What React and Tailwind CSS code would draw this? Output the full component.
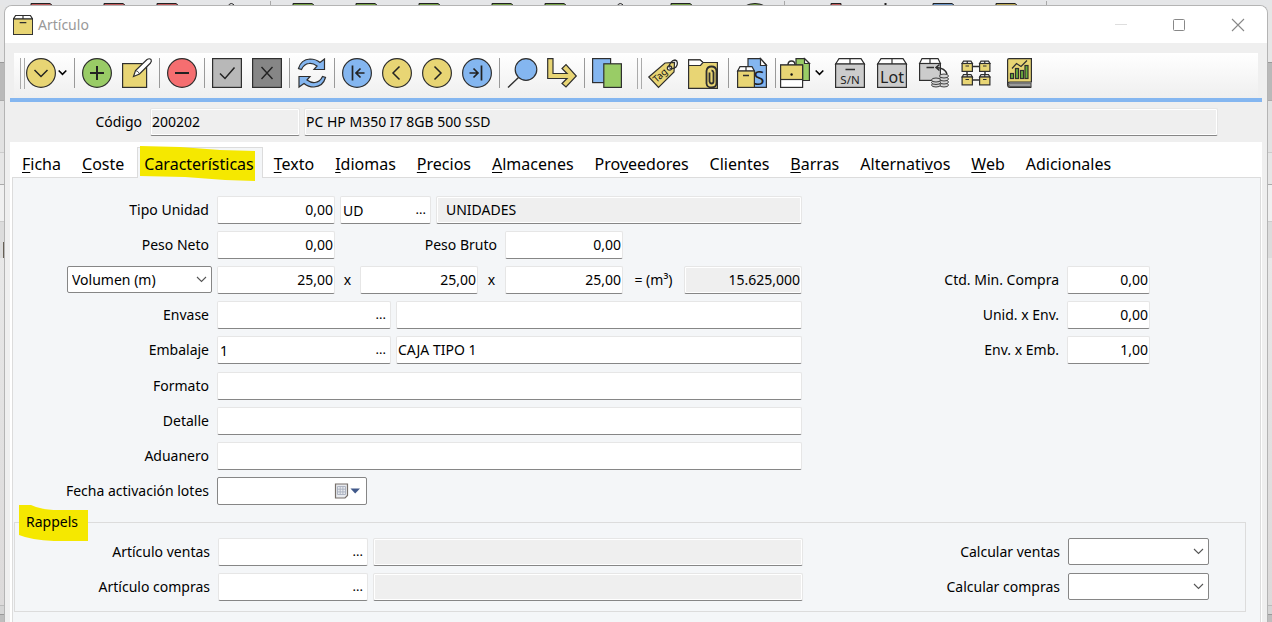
import React from "react";

const INK = "#2f2f2f";
const YELLOW = "#e8d574";
const BLUE = "#84b6f0";
const GREEN = "#99cc66";
const GREY = "#cccccc";

function Icon({ children }) {
  return (
    <svg className="block size-[30px] overflow-visible" viewBox="0 0 30 30" fill="none" stroke={INK} strokeWidth="1.2" aria-hidden="true">
      {children}
    </svg>
  );
}

function Disc({ fill, d, width = 1.5 }) {
  return (
    <Icon>
      <circle cx="15" cy="15" r="14.4" fill={fill} />
      <path d={d} strokeWidth={width} stroke="#222" />
    </Icon>
  );
}

function Carton({ x = 0, y = 0, w = 30, h = 30, lid = 6, fill = YELLOW, inset = 4 }) {
  return (
    <g>
      <path d={`M${x + 0.6} ${y + lid}L${x + inset} ${y + 0.6}H${x + w - inset}L${x + w - 0.6} ${y + lid}Z`} fill="#fff" />
      <rect x={x + 0.6} y={y + lid} width={w - 1.2} height={h - lid - 0.6} fill={fill} />
      <path d={`M${x + w / 2} ${y + 0.6}V${y + lid}`} />
    </g>
  );
}

const icons = {
  menu: <Disc fill={YELLOW} d="M8.5 12L15 18.5L21.500 12" />,
  add: <Disc fill={GREEN} d="M15 8V22M8 15H22" width={2} />,
  remove: <Disc fill="#f56e70" d="M8 15H22" width={1.8} />,
  first: <Disc fill={BLUE} d="M10.500 7.500V22.500M22.500 15H14M18.500 10.500L14 15L18.500 19.500" width={1.7} />,
  prev: <Disc fill={YELLOW} d="M17.500 8.500L11 15L17.500 21.500" />,
  next: <Disc fill={YELLOW} d="M12.500 8.500L19 15L12.500 21.500" />,
  last: <Disc fill={BLUE} d="M19.500 7.500V22.500M7.500 15H16M11.500 10.500L16 15L11.500 19.500" width={1.7} />,
  edit: (
    <Icon>
      <rect x="0.6" y="5.600" width="24" height="23.800" fill={YELLOW} />
      <path d="M11.500 18.500L13.500 12.500L25 1.500Q27.500 0 29 1.500Q30 3 28.500 5L17.500 16Z" fill="#fff" />
      <path d="M13.500 12.500Q16.500 13 17.500 16" strokeWidth="0.8" />
    </Icon>
  ),
  check: (
    <Icon>
      <rect x="0.6" y="0.6" width="28.800" height="28.800" fill="#b8b8b8" />
      <path d="M8 15.500L13 20.500L22.500 9.500" stroke="#222" strokeWidth="1.500" />
    </Icon>
  ),
  cancel: (
    <Icon>
      <rect x="0.6" y="0.6" width="28.800" height="28.800" fill="#868686" />
      <path d="M9.500 9L20.500 21M20.500 9L9.500 21" stroke="#222" strokeWidth="1.400" />
    </Icon>
  ),
  refresh: (
    <Icon>
      <path d="M1.500 10.500Q4 1.500 13 1Q19 1 23 4.500L27.500 1V11.500H17L20 8Q16 5 12 5.500Q7 6 4.500 11.500Z" fill={BLUE} />
      <path d="M28.500 19.500Q26 28.500 17 29Q11 29 7 25.500L2 29V18.500H13L10 22Q14 25 18 24.500Q23 24 25.500 18.500Z" fill={BLUE} />
    </Icon>
  ),
  search: (
    <Icon>
      <circle cx="19" cy="11.500" r="10.800" fill={BLUE} />
      <path d="M11.500 19.500L1 29.500" strokeWidth="1.400" />
    </Icon>
  ),
  goto: (
    <Icon>
      <path d="M0.700 0.700H6V15.500H20L15 10.500L19 6.500L29.300 18L19 29L15 25.500L20 20.500H0.700Z" fill={YELLOW} />
    </Icon>
  ),
  copy: (
    <Icon>
      <rect x="0.6" y="0.6" width="18" height="24" fill={BLUE} />
      <rect x="11.800" y="5.800" width="17.600" height="23.600" fill={GREEN} />
    </Icon>
  ),
  tag: (
    <Icon>
      <path d="M0.800 18L17 4L26.500 3.500L26 13L10.500 28.500Z" fill={YELLOW} />
      <circle cx="21.500" cy="9" r="2.200" fill="#fff" />
      <path d="M21 8.500C21 5 24 1 27 1C30 1.500 30 5.500 28 8C26.500 9.500 24 10 21.500 9" strokeWidth="1.300" />
      <text x="8.500" y="24" transform="rotate(-42 8.500 24)" fontSize="9.500" fontFamily="Noto Sans, sans-serif" fill="#111" stroke="none">Tag</text>
    </Icon>
  ),
  folder: (
    <Icon>
      <path d="M0.600 29.400V0.800H12L15 3.500H29.400V29.400Z" fill={YELLOW} />
      <path d="M0.600 5.500V0.800H12L15 3.500L12.500 6.500H0.600Z" fill="#fff" />
      <path d="M18.500 12V24.500Q19 28.500 23.500 28.500Q28.500 28.500 28.500 24V12Q28 7.500 23.500 7.500Q19 7.500 18.500 12M21.500 13.500V22.500Q22 24.500 23.500 24.500Q25.500 24.500 25.500 22.500V13.500Q25 11.500 23.500 11.500" strokeWidth="1.800" />
    </Icon>
  ),
  boxDoc: (
    <Icon>
      <path d="M11 0.600H23.500L29.400 7V29.400H11Z" fill={BLUE} />
      <path d="M23.500 0.600V7.500H29.400Z" fill="#fff" />
      <Carton x={0} y={8} w={18} h={22} lid={5} inset={3} />
      <path d="M6 17.500H12" strokeWidth="1.600" />
      <text x="16.500" y="27" fontSize="20" fontFamily="Noto Sans, sans-serif" fill="#222" stroke="none">S</text>
    </Icon>
  ),
  caseDoc: (
    <Icon>
      <path d="M16 0.600H24.500L29.400 5.500V22.500H16Z" fill={GREEN} />
      <path d="M24.500 0.600V5.500H29.400Z" fill="#fff" />
      <path d="M8 7Q8 3 11.500 3Q15 3 15 7" strokeWidth="1.500" />
      <rect x="0.6" y="7" width="22" height="22.400" fill="#fff" />
      <rect x="0.6" y="7" width="22" height="14.500" fill={YELLOW} />
      <circle cx="11.600" cy="16.500" r="1.200" fill="#111" stroke="none" />
    </Icon>
  ),
  serial: (
    <Icon>
      <Carton fill={GREY} />
      <path d="M10.500 11.500H20" strokeWidth="1.700" />
      <text x="15" y="25.500" textAnchor="middle" fontSize="11.500" fontFamily="Noto Sans, sans-serif" fill="#222" stroke="none">S/N</text>
    </Icon>
  ),
  lot: (
    <Icon>
      <Carton fill={GREY} />
      <text x="15" y="25" textAnchor="middle" fontSize="16" fontFamily="Noto Sans, sans-serif" fill="#222" stroke="none">Lot</text>
    </Icon>
  ),
  coins: (
    <Icon>
      <Carton w={22} h={23} lid={5.500} fill={GREY} inset={3} />
      <path d="M7.500 9.500H15" strokeWidth="1.600" />
      <path d="M28 16Q26 10 17.500 9.500M20.500 6.500L17 9.500L20.500 12.500" strokeWidth="1.500" />
      <g fill="#d4d4d4" strokeWidth="0.9">
        <ellipse cx="25" cy="27" rx="4.500" ry="2" />
        <ellipse cx="25" cy="24" rx="4.500" ry="2" />
        <ellipse cx="25" cy="21" rx="4.500" ry="2" />
        <ellipse cx="25" cy="18" rx="4.500" ry="2" />
        <ellipse cx="17" cy="27" rx="4.500" ry="2" />
        <ellipse cx="17" cy="24.500" rx="4.500" ry="2" />
        <ellipse cx="17" cy="22" rx="4.500" ry="2" />
      </g>
    </Icon>
  ),
  nodes: (
    <Icon>
      <path d="M11 8.500H19M11 22H19M6 14V17M24 14V17" strokeWidth="1.500" />
      {[[0.5, 2.5], [18, 2.5], [0.5, 16], [18, 16]].map(([x, y]) => (
        <g key={`${x}-${y}`}>
          <Carton x={x} y={y} w={11.500} h={11.500} lid={3} inset={2} />
          <path d={`M${x + 4} ${y + 5.500}H${x + 7.500}`} />
        </g>
      ))}
    </Icon>
  ),
  report: (
    <Icon>
      <path d="M4.600 26V2Q4.600 0.600 6 0.600H28.400V24H7Q4.600 24 4.600 26.500Q4.600 29.400 7 29.400H28.400" fill={YELLOW} />
      <path d="M6 25H28V28.500H7Q4.500 27 6 25Z" fill="#9a9a9a" stroke="#555" />
      <g fill="#6cae3c">
        <rect x="7.500" y="15.500" width="3" height="5" />
        <rect x="12.500" y="10.500" width="3" height="10" />
        <rect x="17.500" y="12.500" width="3" height="8" />
        <rect x="22" y="7.500" width="3" height="13" />
      </g>
      <path d="M9 10.500L13.500 5.500L18 8.500L24 2.500" />
    </Icon>
  ),
};

function Tool({ name, label }) {
  return (
    <button type="button" aria-label={label} className="shrink-0">
      {icons[name]}
    </button>
  );
}

function More({ label }) {
  return (
    <button type="button" aria-label={label} className="shrink-0">
      <svg className="block h-[30px] w-[9px]" viewBox="0 0 9 30" fill="none" stroke="#000" strokeWidth="1.600" aria-hidden="true">
        <path d="M0.700 12.500L4.500 16.300L8.300 12.500" />
      </svg>
    </button>
  );
}

const Sep = () => <span className="mx-[7px] h-[30px] w-px shrink-0 bg-[#999]" />;
const Grip = () => <span className="h-[31px] w-[5px] shrink-0 border-x border-[#aaa]" />;
const Group = ({ children }) => <div className="flex shrink-0 gap-2.5">{children}</div>;

const edge = "rounded-[2px] border border-[#e6e6e6] border-b-[#868686]";
const plain = `${edge} h-7 bg-white px-px pb-0.5 outline-none`;
const locked = `${edge} h-7 bg-[#efefef] px-px pb-0.5 outline-none shadow-[inset_0_0_0_1px_#fff]`;

function Label({ htmlFor, children, className = "w-[195px]" }) {
  return (
    <label htmlFor={htmlFor} className={`${className} shrink-0 pb-0.5 text-right whitespace-nowrap`}>
      {children}
    </label>
  );
}

function Num({ id, value, label, className = "w-[118px]" }) {
  return <input id={id} aria-label={label} defaultValue={value} className={`${plain} ${className} shrink-0 text-right`} />;
}

function Lookup({ id, label, value = "", className }) {
  return (
    <div className={`${edge} ${className} flex h-7 shrink-0 bg-white`}>
      <input id={id} aria-label={label} defaultValue={value} className="min-w-0 flex-1 px-[2px] outline-none" />
      <button type="button" aria-label="Buscar" className="px-1 text-[13px]">...</button>
    </div>
  );
}

function Combo({ id, label, options, className }) {
  return (
    <div className={`${className} relative shrink-0 pb-px`}>
      <select id={id} aria-label={label} className="block h-[27px] w-full appearance-none rounded-[2px] border border-[#868686] bg-white px-1 outline-none">
        {options.map((o) => (
          <option key={o}>{o}</option>
        ))}
      </select>
      <svg className="pointer-events-none absolute top-[10px] right-[5px] h-[7px] w-[11px]" viewBox="0 0 11 7" fill="none" stroke="#555" strokeWidth="1.100" aria-hidden="true">
        <path d="M1 1L5.500 5.500L10 1" />
      </svg>
    </div>
  );
}

const Row = ({ children }) => <div className="flex h-7 items-center">{children}</div>;

const tabs = [
  ["", "F", "icha"],
  ["", "C", "oste"],
  ["Características", "", ""],
  ["", "T", "exto"],
  ["", "I", "diomas"],
  ["", "P", "recios"],
  ["", "A", "lmacenes"],
  ["Pro", "v", "eedores"],
  ["Clientes", "", ""],
  ["", "B", "arras"],
  ["Alternati", "v", "os"],
  ["", "W", "eb"],
  ["Adicionales", "", ""],
];

function Tab({ parts }) {
  const [before, key, after] = parts;
  const active = before === "Características";
  const text = (
    <span className="relative">
      {before}
      {key && <span className="underline decoration-1 underline-offset-2 [text-decoration-skip-ink:none]">{key}</span>}
      {after}
    </span>
  );
  if (active) {
    return (
      <button type="button" role="tab" aria-selected="true" className="relative -mb-px ml-0.5 h-[31px] border border-b-0 border-[#dcdcdc] bg-[#f4f6f8] pt-0.5 pr-2 pl-1.5 leading-5 whitespace-nowrap">
        <svg className="absolute top-[-2px] left-[2px] h-[35px] w-[115px]" viewBox="0 0 115 35" preserveAspectRatio="none" aria-hidden="true">
          <path d="M0 0L40 1L80 4L115 5V35L85 34L45 31L0 30Z" fill="#f5e800" />
        </svg>
        {text}
      </button>
    );
  }
  return (
    <button type="button" role="tab" aria-selected="false" className="h-[30px] px-2.5 pt-[3px] leading-5 whitespace-nowrap">
      {text}
    </button>
  );
}

function BehindTop() {
  const docs = [
    [31, "#c05a5c"], [104, "#c05a5c"], [157, "#c05a5c"], [293, "#74a045"], [356, "#74a045"], [419, "#74a045"],
    [492, "#74a045"], [545, "#74a045"], [671, "#74a045"], [933, "#6a94c6"], [996, "#b9a552"],
  ];
  return (
    <svg className="block h-[5px] w-[1272px] max-w-none" viewBox="0 0 1272 5" fill="none" stroke="#222" aria-hidden="true">
      {docs.map(([x, c]) => (
        <path key={x} d={`M${x} 6V3.500H${x + 19}L${x + 22} 6`} fill={c} />
      ))}
      <path d="M228 6Q231 1 235 6M617 6Q620 1 624 6" />
      <path d="M745 6Q755 1 765 6" fill="#74a045" />
      <path d="M831 6V3.500H841V6" fill="#c05a5c" />
      <path d="M885.500 3V5" strokeWidth="2" />
      <path d="M270.500 1V5M784.500 1V5M1046.500 1V5" stroke="#a8a8a8" />
    </svg>
  );
}

function BehindSide({ children }) {
  return (
    <div className="flex w-1 shrink-0 flex-col bg-[#e6e6e6]">
      <div className="h-[57px]" />
      <div className="h-[38px] border-t border-[#999] bg-[#b9b9b9]" />
      <div className="h-[52px] border-t border-[#aaa] bg-[#e2e2e2]" />
      <div className="h-[32px] border-t border-[#ccc] bg-[#e6e6e6]" />
      <div className="h-[37px] border-t border-[#aaa] bg-[#f0f0f0]" />
      <div className="h-[37px] border-t border-[#ccc] bg-[#dcdcdc]">{children}</div>
      <div className="flex-1 bg-linear-to-b from-[#e8e8e8] to-[#dcdada]" />
      <div className="h-[9px] border-t border-[#bbb] bg-[#d5d5d5]" />
      <div className="h-2 border-t border-[#999] bg-[#bebebe]" />
    </div>
  );
}

export default function App() {
  return (
    <div className="flex min-h-screen flex-col overflow-hidden bg-[#e5e6e8] font-['Noto_Sans',sans-serif] text-[14px] text-black">
      <div className="h-[5px] overflow-hidden">
        <BehindTop />
      </div>
      <div className="flex flex-1">
        <BehindSide>
          <div className="mt-5 ml-[3px] h-4 bg-[#665f55]" />
        </BehindSide>

        <main className="flex min-w-0 flex-1 flex-col overflow-hidden rounded-t-lg border border-b-0 border-[#b4b4b4] bg-[#efefef]">
          <header className="flex h-[37px] shrink-0 items-center bg-white pr-[22px] pl-2">
            <svg className="size-5" viewBox="0 0 30 30" fill="none" stroke={INK} strokeWidth="1.700" aria-hidden="true">
              <Carton />
              <path d="M10 11.500H20" strokeWidth="2" />
            </svg>
            <h1 className="ml-[5px] flex-1 text-[14px] text-[#999]">Artículo</h1>
            <div className="flex items-center gap-[46px]">
              <button type="button" aria-label="Minimizar">
                <svg className="block size-3" viewBox="0 0 12 12" aria-hidden="true"><path d="M0 5.500H12" stroke="#dedede" /></svg>
              </button>
              <button type="button" aria-label="Maximizar">
                <svg className="block size-3" viewBox="0 0 12 12" aria-hidden="true"><rect x="0.5" y="0.5" width="11" height="11" rx="1" fill="none" stroke="#888" /></svg>
              </button>
              <button type="button" aria-label="Cerrar">
                <svg className="block size-3.5" viewBox="0 0 14 14" aria-hidden="true"><path d="M1 1L13 13M13 1L1 13" stroke="#888" strokeWidth="1.100" /></svg>
              </button>
            </div>
          </header>

          <div className="mt-2.5 px-[5px]">
            <div className="border-b-4 border-[#84b6f0] px-1">
              <div role="toolbar" aria-label="Acciones" className="flex h-[45px] items-start bg-linear-to-b from-white to-[#efefef] pt-[5px] pl-1.5">
                <Grip />
                <div className="ml-px flex shrink-0 gap-0.5">
                  <Tool name="menu" label="Menú" />
                  <More label="Más opciones" />
                </div>
                <Sep />
                <Group><Tool name="add" label="Nuevo" /><Tool name="edit" label="Editar" /></Group>
                <Sep />
                <Tool name="remove" label="Eliminar" />
                <Sep />
                <Group><Tool name="check" label="Aceptar" /><Tool name="cancel" label="Cancelar" /></Group>
                <Sep />
                <Tool name="refresh" label="Actualizar" />
                <Sep />
                <Group>
                  <Tool name="first" label="Primero" />
                  <Tool name="prev" label="Anterior" />
                  <Tool name="next" label="Siguiente" />
                  <Tool name="last" label="Último" />
                </Group>
                <Sep />
                <Group><Tool name="search" label="Buscar" /><Tool name="goto" label="Ir a" /></Group>
                <Sep />
                <Tool name="copy" label="Duplicar" />
                <div className="ml-[15px] flex shrink-0 gap-1.5">
                  <Grip />
                  <Group><Tool name="tag" label="Etiquetas" /><Tool name="folder" label="Adjuntos" /></Group>
                </div>
                <span className="ml-2.5 h-[30px] w-px shrink-0 bg-[#999]" />
                <div className="ml-2 flex shrink-0"><Tool name="boxDoc" label="Documentos" /></div>
                <span className="ml-2 h-[30px] w-px shrink-0 bg-[#999]" />
                <div className="ml-1 flex shrink-0 gap-[5px]">
                  <Tool name="caseDoc" label="Cartera" />
                  <More label="Más documentos" />
                </div>
                <div className="ml-[11px] flex shrink-0 gap-3">
                  <Tool name="serial" label="Números de serie" />
                  <Tool name="lot" label="Lotes" />
                  <Tool name="coins" label="Costes" />
                  <Tool name="nodes" label="Estructura" />
                  <Tool name="report" label="Informes" />
                </div>
              </div>
            </div>

            <div className="flex items-center py-1.5 pr-11">
              <Label htmlFor="codigo" className="w-[132px]">Código</Label>
              <input id="codigo" readOnly defaultValue="200202" className={`${locked} ml-2 w-[150px]`} />
              <input aria-label="Descripción" readOnly defaultValue="PC HP M350 I7 8GB 500 SSD" className={`${locked} ml-1 min-w-0 flex-1`} />
            </div>
          </div>

          <div className="mx-[5px] flex flex-1 flex-col bg-white pr-px pl-0.5">
            <div role="tablist" className="flex h-[35px] items-end gap-px text-[16px]">
              {tabs.map((t) => (
                <Tab key={t.join("")} parts={t} />
              ))}
            </div>

            <section className="flex-1 border border-b-0 border-[#dcdcdc] bg-[#f4f6f8] pt-[18px] pr-3.5 pl-px">
              <div className="flex">
                <div className="flex min-w-0 flex-1 flex-col gap-[7px]">
                  <Row>
                    <Label htmlFor="tipo">Tipo Unidad</Label>
                    <span className="ml-2 flex min-w-0 flex-1 gap-[5px]">
                      <Num id="tipo" value="0,00" />
                      <Lookup label="Unidad" value="UD" className="w-[91px]" />
                      <input aria-label="Nombre de unidad" readOnly defaultValue="UNIDADES" className={`${locked} min-w-0 flex-1 indent-2`} />
                    </span>
                  </Row>
                  <Row>
                    <Label htmlFor="neto">Peso Neto</Label>
                    <span className="ml-2 flex min-w-0 flex-1 items-center">
                      <Num id="neto" value="0,00" />
                      <Label htmlFor="bruto" className="w-[162px]">Peso Bruto</Label>
                      <span className="ml-2 flex"><Num id="bruto" value="0,00" /></span>
                    </span>
                  </Row>
                  <Row>
                    <span className="flex w-[198px] shrink-0 justify-end">
                      <Combo label="Medida" options={["Volumen (m)"]} className="w-[145px]" />
                    </span>
                    <span className="ml-[5px] flex min-w-0 flex-1 items-center">
                      <Num label="Largo" value="25,00" />
                      <span className="w-[25px] shrink-0 pb-0.5 text-center">x</span>
                      <Num label="Ancho" value="25,00" />
                      <span className="w-[27px] shrink-0 pb-0.5 text-center">x</span>
                      <Num label="Alto" value="25,00" />
                      <span className="w-[61px] shrink-0 pb-0.5 text-center whitespace-nowrap">= (m³)</span>
                      <input aria-label="Volumen total" readOnly defaultValue="15.625,000" className={`${locked} min-w-0 flex-1 text-right`} />
                    </span>
                  </Row>
                  <Row>
                    <Label htmlFor="envase">Envase</Label>
                    <span className="ml-2 flex min-w-0 flex-1 gap-[5px]">
                      <Lookup id="envase" className="w-[174px]" />
                      <input aria-label="Nombre de envase" className={`${plain} min-w-0 flex-1`} />
                    </span>
                  </Row>
                  <Row>
                    <Label htmlFor="embalaje">Embalaje</Label>
                    <span className="ml-2 flex min-w-0 flex-1 gap-[5px]">
                      <Lookup id="embalaje" value="1" className="w-[174px]" />
                      <input aria-label="Nombre de embalaje" defaultValue="CAJA TIPO 1" className={`${plain} min-w-0 flex-1`} />
                    </span>
                  </Row>
                  <div className="flex flex-col gap-[7px] pt-px">
                    {["Formato", "Detalle", "Aduanero"].map((name) => (
                      <Row key={name}>
                        <Label htmlFor={name}>{name}</Label>
                        <input id={name} className={`${plain} ml-2 min-w-0 flex-1`} />
                      </Row>
                    ))}
                    <Row>
                      <Label htmlFor="fecha">Fecha activación lotes</Label>
                      <span className="ml-2 flex h-7 w-[150px] rounded-[2px] border border-[#868686] bg-white">
                        <input id="fecha" className="min-w-0 flex-1 px-1 outline-none" />
                        <button type="button" aria-label="Abrir calendario" className="pr-1.5">
                          <svg className="block h-4 w-[26px]" viewBox="0 0 26 16" fill="none" aria-hidden="true">
                            <path d="M1.500 1H13.500V12.500L11 15H1.500Z" fill="#e8eaee" stroke="#766f6a" strokeWidth="1.200" />
                            <path d="M3.500 3.500H11.500V11.500H3.500ZM6.200 3.500V11.500M8.900 3.500V11.500M3.500 6.200H11.500M3.500 8.900H11.500" stroke="#a9b0be" strokeWidth="0.9" />
                            <path d="M16.500 5.500H26L21.200 10.500Z" fill="#41598a" />
                          </svg>
                        </button>
                      </span>
                    </Row>
                  </div>
                </div>

                <div className="flex w-[444px] shrink-0 flex-col gap-[7px] pt-[70px]">
                  {[["Ctd. Min. Compra", "0,00"], ["Unid. x Env.", "0,00"], ["Env. x Emb.", "1,00"]].map(([name, value]) => (
                    <Row key={name}>
                      <Label htmlFor={name} className="w-[257px]">{name}</Label>
                      <span className="ml-2 flex"><Num id={name} value={value} className="w-[83px]" /></span>
                    </Row>
                  ))}
                </div>
              </div>

              <fieldset className="mt-[7px] border border-[#dcdcdc] pb-2.5">
                <legend className="relative ml-1 px-[7px] leading-5">
                  <svg className="absolute top-[-7px] left-0 h-9 w-[69px]" viewBox="0 0 69 36" preserveAspectRatio="none" aria-hidden="true">
                    <path d="M0 0H12Q22 5 40 5H69V36H35Q12 35 0 30Z" fill="#f5e800" />
                  </svg>
                  <span className="relative">Rappels</span>
                </legend>
                <div className="flex flex-col gap-[7px] pt-1.5">
                  {["ventas", "compras"].map((kind) => (
                    <Row key={kind}>
                      <Label htmlFor={`articulo-${kind}`}>Artículo {kind}</Label>
                      <span className="ml-2 flex min-w-0 flex-1 gap-[5px]">
                        <Lookup id={`articulo-${kind}`} className="w-[150px]" />
                        <input aria-label={`Nombre de artículo ${kind}`} readOnly className={`${locked} min-w-0 flex-1`} />
                      </span>
                      <Label htmlFor={`calcular-${kind}`} className="w-[257px]">Calcular {kind}</Label>
                      <span className="mr-9 ml-2 flex">
                        <Combo id={`calcular-${kind}`} options={[""]} className="w-[141px]" />
                      </span>
                    </Row>
                  ))}
                </div>
              </fieldset>
            </section>
          </div>
        </main>

        <BehindSide />
      </div>
    </div>
  );
}
